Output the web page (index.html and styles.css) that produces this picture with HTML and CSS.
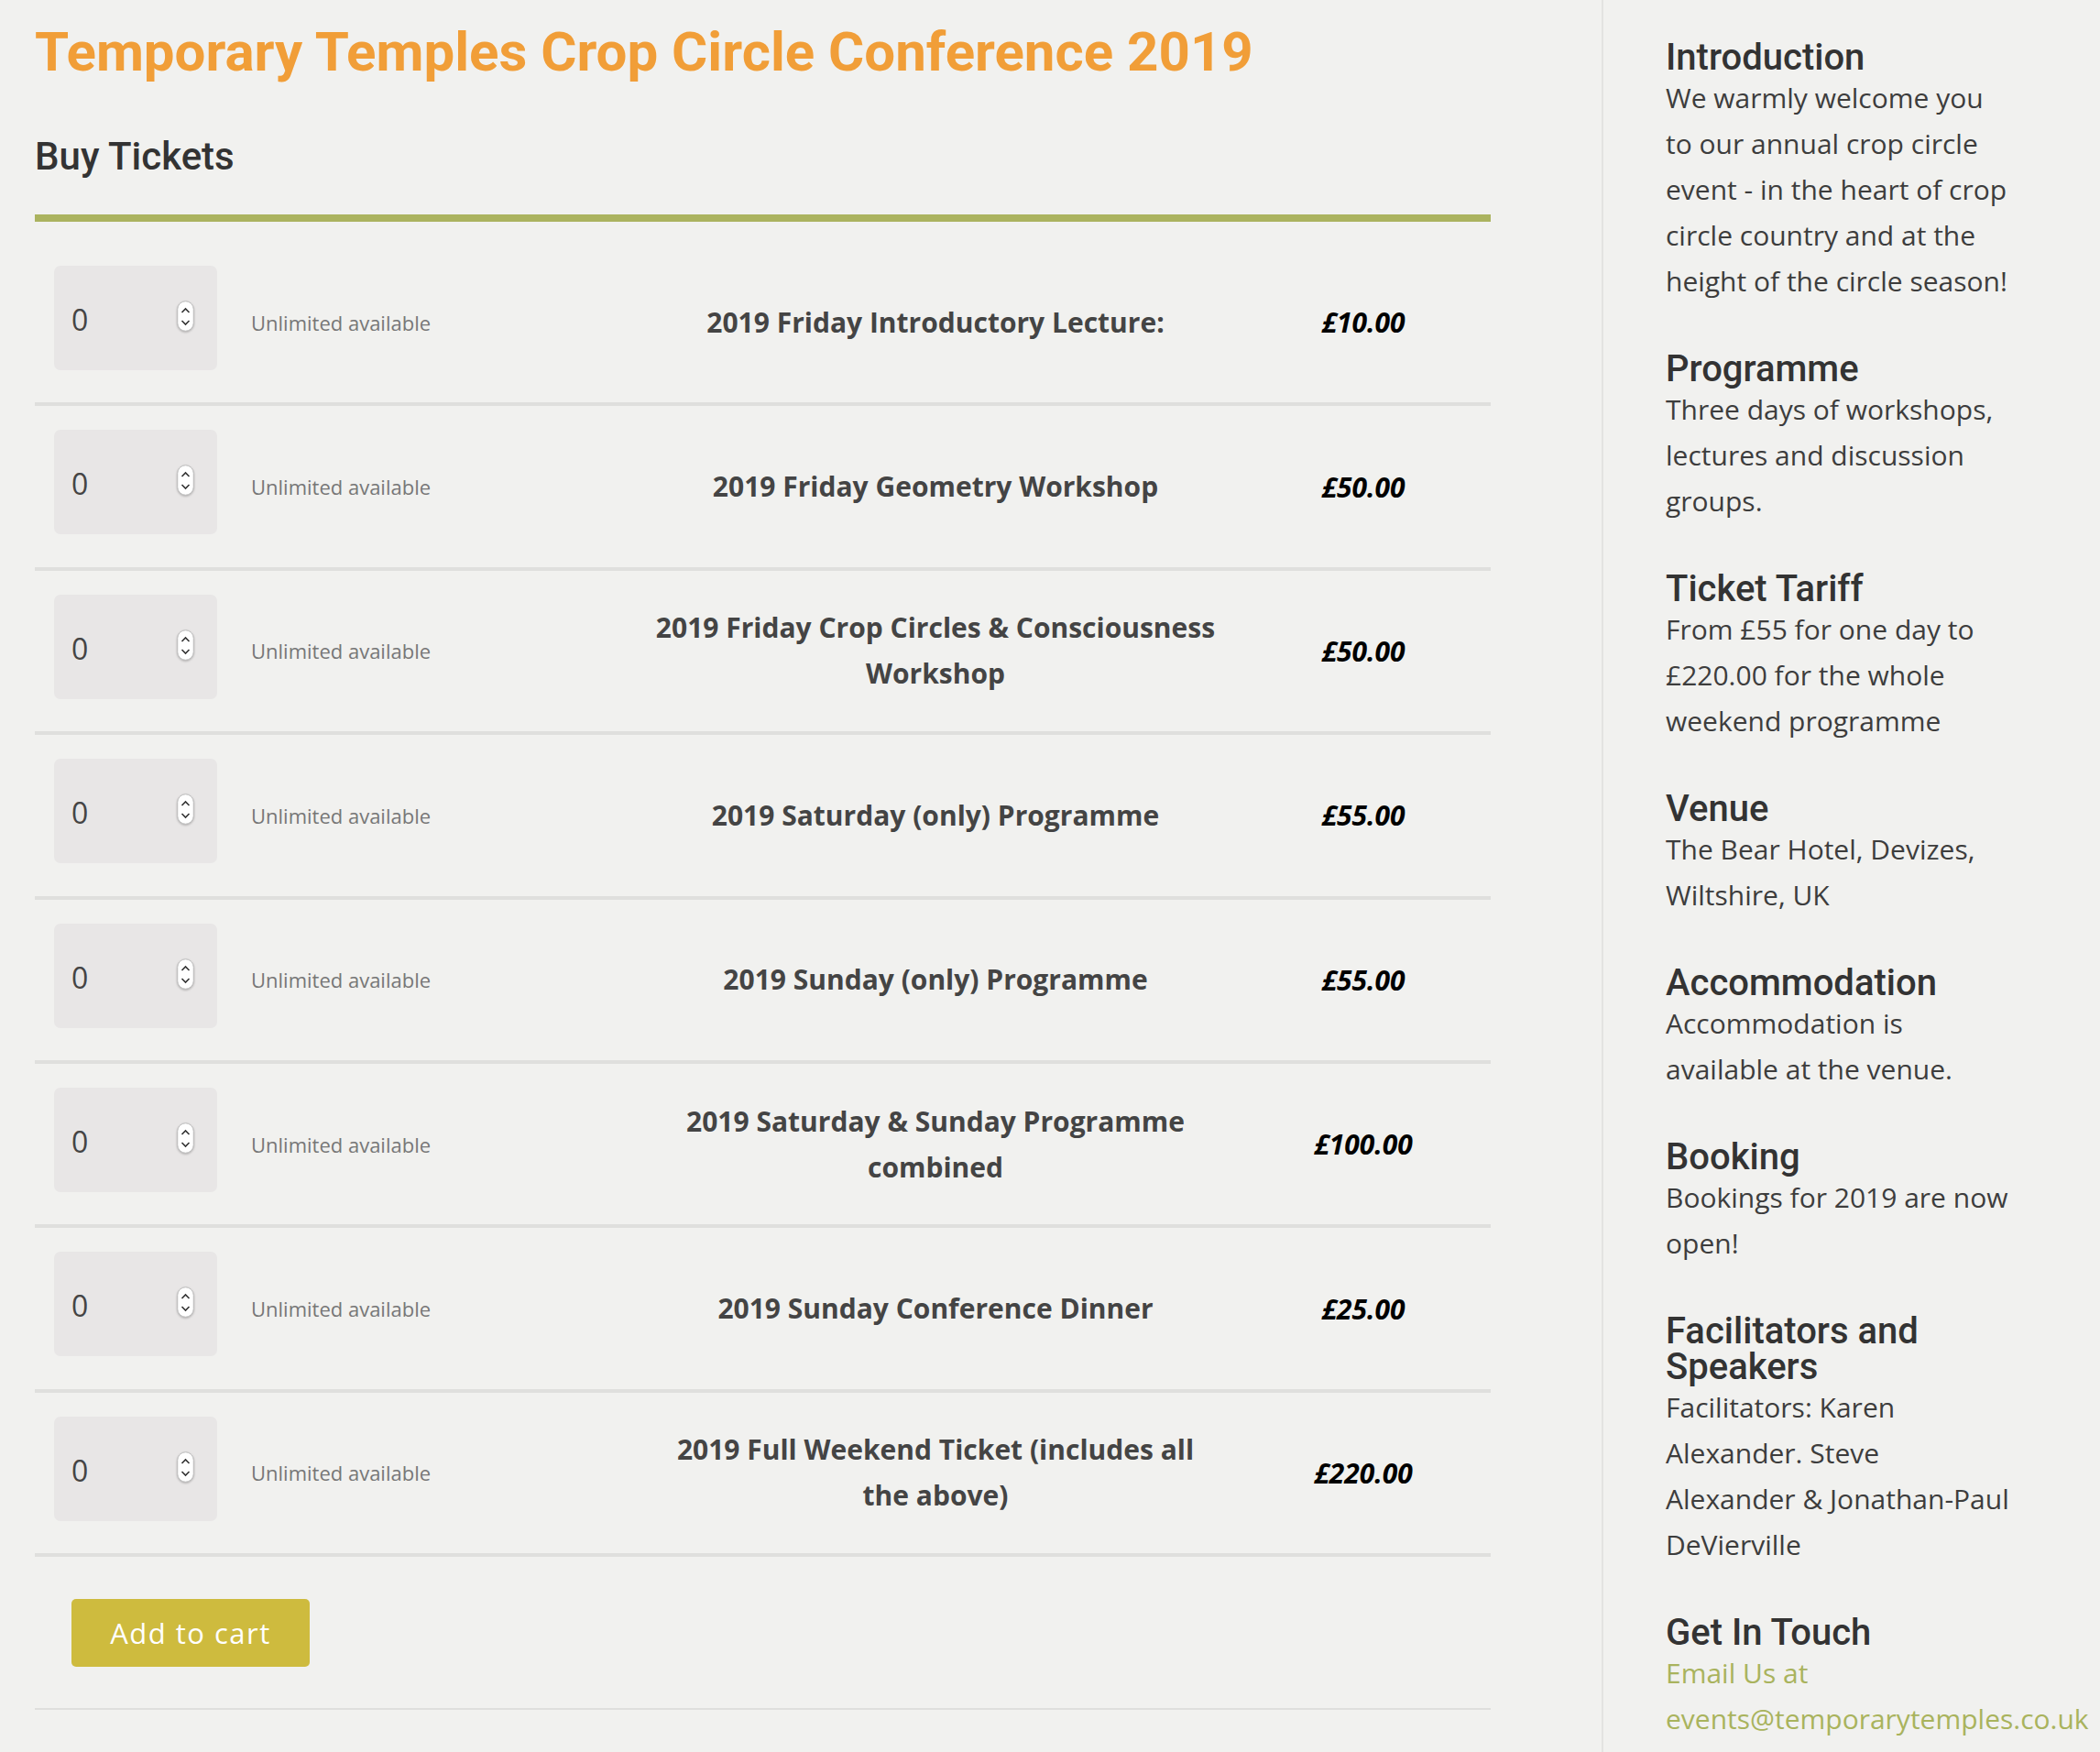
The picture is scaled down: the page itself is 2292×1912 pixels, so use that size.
FILE: index.html
```html
<!DOCTYPE html>
<html lang="en">
<head>
<meta charset="utf-8">
<title>Temporary Temples Crop Circle Conference 2019</title>
<link rel="stylesheet" href="styles.css">
</head>
<body>
<div class="page">
  <main class="main">
    <h1 class="title">Temporary Temples Crop Circle Conference 2019</h1>
    <h2 class="section-title">Buy Tickets</h2>
    <div class="tickets">
      <div class="ticket-row">
        <div class="qty-cell"><div class="qty"><span class="qty-value">0</span><svg class="spinner" viewBox="0 0 19 34" width="19" height="34"><rect x="0.75" y="0.75" width="17.5" height="32.5" rx="8.75" fill="#fff" stroke="#bdbdbd" stroke-width="1"/><polyline points="5.5,13 9.5,9 13.5,13" fill="none" stroke="#333" stroke-width="1.6"/><polyline points="5.5,22 9.5,26 13.5,22" fill="none" stroke="#333" stroke-width="1.6"/></svg></div></div>
        <div class="avail">Unlimited available</div>
        <div class="name">2019 Friday Introductory Lecture:</div>
        <div class="price">£10.00</div>
      </div>
      <div class="ticket-row">
        <div class="qty-cell"><div class="qty"><span class="qty-value">0</span><svg class="spinner" viewBox="0 0 19 34" width="19" height="34"><rect x="0.75" y="0.75" width="17.5" height="32.5" rx="8.75" fill="#fff" stroke="#bdbdbd" stroke-width="1"/><polyline points="5.5,13 9.5,9 13.5,13" fill="none" stroke="#333" stroke-width="1.6"/><polyline points="5.5,22 9.5,26 13.5,22" fill="none" stroke="#333" stroke-width="1.6"/></svg></div></div>
        <div class="avail">Unlimited available</div>
        <div class="name">2019 Friday Geometry Workshop</div>
        <div class="price">£50.00</div>
      </div>
      <div class="ticket-row">
        <div class="qty-cell"><div class="qty"><span class="qty-value">0</span><svg class="spinner" viewBox="0 0 19 34" width="19" height="34"><rect x="0.75" y="0.75" width="17.5" height="32.5" rx="8.75" fill="#fff" stroke="#bdbdbd" stroke-width="1"/><polyline points="5.5,13 9.5,9 13.5,13" fill="none" stroke="#333" stroke-width="1.6"/><polyline points="5.5,22 9.5,26 13.5,22" fill="none" stroke="#333" stroke-width="1.6"/></svg></div></div>
        <div class="avail">Unlimited available</div>
        <div class="name">2019 Friday Crop Circles &amp; Consciousness Workshop</div>
        <div class="price">£50.00</div>
      </div>
      <div class="ticket-row">
        <div class="qty-cell"><div class="qty"><span class="qty-value">0</span><svg class="spinner" viewBox="0 0 19 34" width="19" height="34"><rect x="0.75" y="0.75" width="17.5" height="32.5" rx="8.75" fill="#fff" stroke="#bdbdbd" stroke-width="1"/><polyline points="5.5,13 9.5,9 13.5,13" fill="none" stroke="#333" stroke-width="1.6"/><polyline points="5.5,22 9.5,26 13.5,22" fill="none" stroke="#333" stroke-width="1.6"/></svg></div></div>
        <div class="avail">Unlimited available</div>
        <div class="name">2019 Saturday (only) Programme</div>
        <div class="price">£55.00</div>
      </div>
      <div class="ticket-row">
        <div class="qty-cell"><div class="qty"><span class="qty-value">0</span><svg class="spinner" viewBox="0 0 19 34" width="19" height="34"><rect x="0.75" y="0.75" width="17.5" height="32.5" rx="8.75" fill="#fff" stroke="#bdbdbd" stroke-width="1"/><polyline points="5.5,13 9.5,9 13.5,13" fill="none" stroke="#333" stroke-width="1.6"/><polyline points="5.5,22 9.5,26 13.5,22" fill="none" stroke="#333" stroke-width="1.6"/></svg></div></div>
        <div class="avail">Unlimited available</div>
        <div class="name">2019 Sunday (only) Programme</div>
        <div class="price">£55.00</div>
      </div>
      <div class="ticket-row">
        <div class="qty-cell"><div class="qty"><span class="qty-value">0</span><svg class="spinner" viewBox="0 0 19 34" width="19" height="34"><rect x="0.75" y="0.75" width="17.5" height="32.5" rx="8.75" fill="#fff" stroke="#bdbdbd" stroke-width="1"/><polyline points="5.5,13 9.5,9 13.5,13" fill="none" stroke="#333" stroke-width="1.6"/><polyline points="5.5,22 9.5,26 13.5,22" fill="none" stroke="#333" stroke-width="1.6"/></svg></div></div>
        <div class="avail">Unlimited available</div>
        <div class="name">2019 Saturday &amp; Sunday Programme combined</div>
        <div class="price">£100.00</div>
      </div>
      <div class="ticket-row">
        <div class="qty-cell"><div class="qty"><span class="qty-value">0</span><svg class="spinner" viewBox="0 0 19 34" width="19" height="34"><rect x="0.75" y="0.75" width="17.5" height="32.5" rx="8.75" fill="#fff" stroke="#bdbdbd" stroke-width="1"/><polyline points="5.5,13 9.5,9 13.5,13" fill="none" stroke="#333" stroke-width="1.6"/><polyline points="5.5,22 9.5,26 13.5,22" fill="none" stroke="#333" stroke-width="1.6"/></svg></div></div>
        <div class="avail">Unlimited available</div>
        <div class="name">2019 Sunday Conference Dinner</div>
        <div class="price">£25.00</div>
      </div>
      <div class="ticket-row">
        <div class="qty-cell"><div class="qty"><span class="qty-value">0</span><svg class="spinner" viewBox="0 0 19 34" width="19" height="34"><rect x="0.75" y="0.75" width="17.5" height="32.5" rx="8.75" fill="#fff" stroke="#bdbdbd" stroke-width="1"/><polyline points="5.5,13 9.5,9 13.5,13" fill="none" stroke="#333" stroke-width="1.6"/><polyline points="5.5,22 9.5,26 13.5,22" fill="none" stroke="#333" stroke-width="1.6"/></svg></div></div>
        <div class="avail">Unlimited available</div>
        <div class="name">2019 Full Weekend Ticket (includes all the above)</div>
        <div class="price">£220.00</div>
      </div>
    </div>
    <div class="cart-bar">
      <button class="cart-btn" type="button">Add to cart</button>
    </div>
  </main>
  <aside class="sidebar">
    <section class="widget">
      <h3 class="widget-title">Introduction</h3>
      <p class="widget-text">We warmly welcome you to our annual crop circle event - in the heart of crop circle country and at the height of the circle season!</p>
    </section>
    <section class="widget">
      <h3 class="widget-title">Programme</h3>
      <p class="widget-text">Three days of workshops, lectures and discussion groups.</p>
    </section>
    <section class="widget">
      <h3 class="widget-title">Ticket Tariff</h3>
      <p class="widget-text">From £55 for one day to £220.00 for the whole weekend programme</p>
    </section>
    <section class="widget">
      <h3 class="widget-title">Venue</h3>
      <p class="widget-text">The Bear Hotel, Devizes, Wiltshire, UK</p>
    </section>
    <section class="widget">
      <h3 class="widget-title">Accommodation</h3>
      <p class="widget-text">Accommodation is available at the venue.</p>
    </section>
    <section class="widget">
      <h3 class="widget-title">Booking</h3>
      <p class="widget-text">Bookings for 2019 are now open!</p>
    </section>
    <section class="widget">
      <h3 class="widget-title">Facilitators and Speakers</h3>
      <p class="widget-text">Facilitators: Karen Alexander. Steve Alexander &amp; Jonathan-Paul DeVierville</p>
    </section>
    <section class="widget">
      <h3 class="widget-title">Get In Touch</h3>
      <p class="widget-text"><a class="mail-link" href="#">Email Us at events@temporarytemples.co.uk</a></p>
    </section>
  </aside>
</div>
</body>
</html>
```

FILE: styles.css
```css
html, body {
  margin: 0;
  padding: 0;
  background: #f1f1ef;
  overflow-x: hidden;
}

.page {
  display: flex;
  min-height: 1912px;
}

.main {
  width: 1748px;
  flex: none;
  box-sizing: border-box;
  padding: 21px 0 0 38px;
}

.title {
  margin: 0;
  font-family: Roboto, "Liberation Sans", sans-serif;
  font-weight: 700;
  font-size: 60px;
  line-height: 72px;
  color: #f19e38;
}

.section-title {
  margin: 54px 0 0;
  font-family: Roboto, "Liberation Sans", sans-serif;
  font-weight: 500;
  font-size: 42px;
  line-height: 48px;
  color: #333;
}

.tickets {
  width: 1589px;
  margin-top: 39px;
  padding-top: 22px;
  border-top: 8px solid #abb35f;
}

.ticket-row {
  display: grid;
  grid-template-columns: 236px 440px 614px 299px;
  align-items: center;
  border-bottom: 4px solid #dfdfdd;
}

.qty-cell {
  padding: 26px 0 35.4px 21px;
}

.qty {
  box-sizing: border-box;
  width: 178px;
  height: 114px;
  padding: 0 25px 0 19px;
  background: #e8e6e6;
  border-radius: 7px;
  display: flex;
  align-items: center;
  justify-content: space-between;
}

.qty-value {
  font-family: "Open Sans", "Liberation Sans", sans-serif;
  font-size: 32px;
  color: #444;
  padding-top: 3px;
}

.spinner {
  display: block;
  margin-top: -4px;
  filter: drop-shadow(0 1px 1px rgba(0, 0, 0, 0.25));
}

.avail {
  font-family: "Open Sans", "Liberation Sans", sans-serif;
  font-size: 22px;
  color: #777;
}

.name {
  font-family: "Open Sans", "Liberation Sans", sans-serif;
  font-weight: 700;
  font-size: 30px;
  line-height: 50px;
  color: #444;
  text-align: center;
}

.price {
  padding-left: 21px;
  font-family: "Open Sans", "Liberation Sans", sans-serif;
  font-weight: 700;
  font-style: italic;
  font-size: 30px;
  color: #000;
  text-align: center;
}

.cart-bar {
  width: 1589px;
  box-sizing: border-box;
  padding: 46px 0 45px 40px;
  border-bottom: 2px solid #dfdfdd;
}

.cart-btn {
  display: block;
  width: 260px;
  height: 74px;
  padding: 0;
  border: 0;
  border-radius: 5px;
  background: #cebb3e;
  color: #fff;
  font-family: "Open Sans", "Liberation Sans", sans-serif;
  font-size: 31px;
  letter-spacing: 1.5px;
}

.sidebar {
  flex: 1;
  border-left: 2px solid #e3e3e1;
  padding: 43px 0 0 68px;
}

.widget {
  width: 376px;
  margin-bottom: 51px;
}

.widget-title {
  margin: 0;
  font-family: Roboto, "Liberation Sans", sans-serif;
  font-weight: 500;
  font-size: 40px;
  line-height: 39px;
  color: #333;
}

.widget-text {
  margin: 0;
  font-family: "Open Sans", "Liberation Sans", sans-serif;
  font-size: 30px;
  line-height: 50px;
  color: #3d3d3d;
}

.mail-link {
  color: #a9b35d;
  text-decoration: none;
}
```
